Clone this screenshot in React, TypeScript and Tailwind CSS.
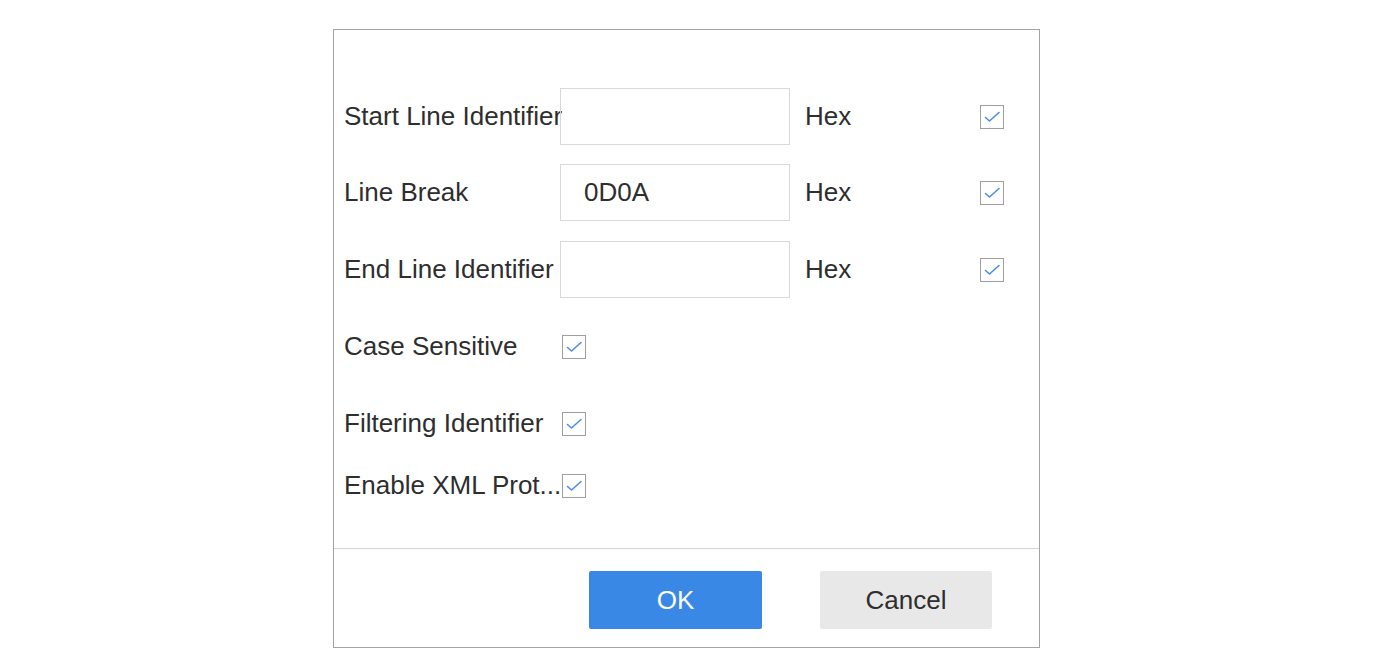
import React from 'react';

const Check: React.FC<{ className?: string }> = ({ className = '' }) => (
  <span className={`flex h-[24px] w-[24px] shrink-0 items-center justify-center border border-[#9e9e9e] bg-white ${className}`}>
    <svg width="22" height="22" viewBox="0 0 22 22" fill="none">
      <path d="M4.5 11.5 L8.5 15 L18 6.5" stroke="#4a8fe3" strokeWidth="1.6" strokeLinecap="round" strokeLinejoin="round" />
    </svg>
  </span>
);

const HexRow: React.FC<{ label: string; value?: string; className?: string }> = ({ label, value = '', className = '' }) => (
  <div className={`flex h-[57px] items-center ${className}`}>
    <div className="w-[216px] shrink-0 whitespace-nowrap">{label}</div>
    <div className="flex h-[57px] w-[230px] shrink-0 items-center border border-[#d9d9d9] pl-[23px]">{value}</div>
    <div className="ml-[15px] w-[175px] shrink-0">Hex</div>
    <Check />
  </div>
);

const CheckRow: React.FC<{ label: string; className?: string }> = ({ label, className = '' }) => (
  <div className={`flex h-[57px] items-center ${className}`}>
    <div className="w-[216px] shrink-0 whitespace-nowrap">{label}</div>
    <Check className="ml-[2px]" />
  </div>
);

const App: React.FC = () => {
  return (
    <div className="h-[660px] w-full overflow-hidden bg-white pt-[29px] text-[26px] text-[#2e2e2e]" style={{ fontFamily: '"Liberation Sans", Arial, sans-serif' }}>
      <div className="ml-[333px] flex h-[619px] w-[707px] flex-col border border-[#a3a3a3]">
        <div className="h-[518px] pl-[10px]">
          <HexRow label="Start Line Identifier" className="mt-[58px]" />
          <HexRow label="Line Break" value="0D0A" className="mt-[19px]" />
          <HexRow label="End Line Identifier" className="mt-[20px]" />
          <CheckRow label="Case Sensitive" className="mt-[20px]" />
          <CheckRow label="Filtering Identifier" className="mt-[20px]" />
          <CheckRow label="Enable XML Prot..." className="mt-[5px]" />
        </div>
        <div className="flex flex-1 border-t border-[#d4d4d4] pt-[22px]">
          <button className="ml-[255px] h-[58px] w-[173px] rounded-[2px] bg-[#3a88e6] text-white">OK</button>
          <button className="ml-[58px] h-[58px] w-[172px] rounded-[2px] bg-[#e8e8e8] text-[#2e2e2e]">Cancel</button>
        </div>
      </div>
    </div>
  );
};

export default App;
